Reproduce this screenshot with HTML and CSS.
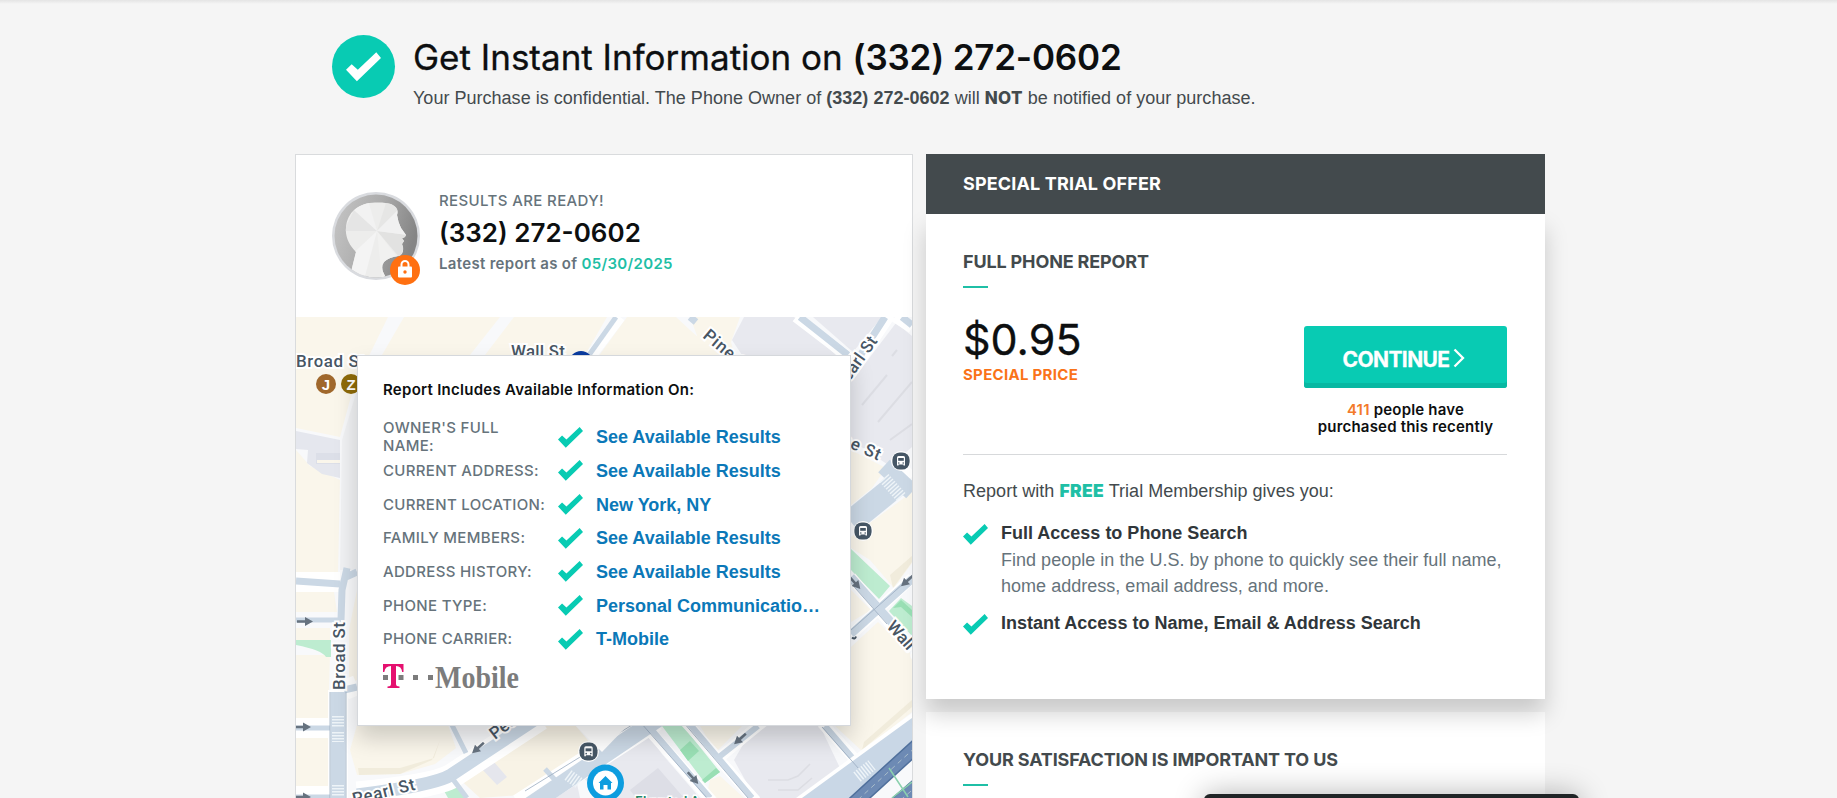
FILE: index.html
```html
<!DOCTYPE html>
<html lang="en">
<head>
<meta charset="utf-8">
<title>Phone Report</title>
<link rel="stylesheet" href="styles.css">
</head>
<body>
<svg class="defs" width="0" height="0">
  <symbol id="check" viewBox="0 0 74 62"><path d="M0 37 12 25 25 37 64 0 74 12 23 61Z" fill="currentColor"/></symbol>
  <symbol id="bus" viewBox="0 0 20 20"><circle cx="10" cy="10" r="10" fill="#fff"/><rect x="1.4" y="1.4" width="17.2" height="17.2" rx="7.5" fill="#465766"/><path d="M6 14.5V6.5Q6 5 7.500 5h5Q14 5 14 6.500v8h-1.500v-1h-5v1z" fill="#fff"/><path d="M7.200 7h5.600v2.800H7.200z" fill="#465766"/><circle cx="7.800" cy="12" r=".8" fill="#465766"/><circle cx="12.200" cy="12" r=".8" fill="#465766"/></symbol>
  <symbol id="arrow" viewBox="0 0 16 10"><path d="M0 3.700h8V0.500L16 5 8 9.500V6.300H0z" fill="#66727f"/></symbol>
</svg>
<div class="page">
  <header class="hero">
    <div class="hero-icon"><svg width="35" height="30"><use href="#check"/></svg></div>
    <div>
      <h1>Get Instant Information on <b>(332) 272-0602</b></h1>
      <p>Your Purchase is confidential. The Phone Owner of <b>(332) 272-0602</b> will <b class="not">NOT</b> be notified of your purchase.</p>
    </div>
  </header>
  <main class="columns">
    <section class="report">
      <div class="summary">
        <div class="avatar">
          <svg width="88" height="88" viewBox="0 0 88 88">
            <defs>
              <linearGradient id="ag" x1="0" x2="1" y1="0" y2=".3"><stop offset="0" stop-color="#c8c8c8"/><stop offset=".55" stop-color="#ababab"/><stop offset="1" stop-color="#858585"/></linearGradient>
              <clipPath id="ac"><circle cx="44" cy="44" r="41.500"/></clipPath>
              <clipPath id="hc"><path id="head" d="M17 88 24 60C17 53 13 44 14 36C15 19 28 11 43 10.500C55 10 63 12 65 17Q66 20 65 23Q66 30 69 36L74 43Q73 46 70 46L72 49 70 52 71 55Q72 62 67 64Q57 65 52 70Q47 77 56 88Z"/></clipPath>
            </defs>
            <circle cx="44" cy="44" r="44" fill="#d9dbdf"/>
            <g clip-path="url(#ac)">
              <rect width="88" height="88" fill="url(#ag)"/>
              <g clip-path="url(#hc)"><rect width="88" height="88" fill="#ededec"/>
                <path d="M45 39 12 39 22 18z" fill="#e5e5e5"/><path d="M45 39 36 8 22 18z" fill="#f2f2f2"/><path d="M45 39 55 8 66 18z" fill="#e6e6e5"/><path d="M45 39 76 43 68 66z" fill="#e2e2e1"/><path d="M45 39 66 66 50 88z" fill="#f1f1f0"/><path d="M45 39 32 88 12 70z" fill="#f4f4f4"/><path d="M45 39 66 18 76 43z" fill="#f1f1f1"/></g>
            </g>
          </svg>
          <span class="lock"><svg width="14" height="18" viewBox="0 0 14 18"><path d="M3.500 7V4.500a3.500 3.500 0 0 1 7 0V7" fill="none" stroke="#fff" stroke-width="2"/><rect y="6.500" width="14" height="11" rx="1" fill="#fff"/><circle cx="7" cy="12" r="1.700" fill="#ff7011"/></svg></span>
        </div>
        <div class="who">
          <div class="ready">RESULTS ARE READY!</div>
          <div class="number">(332) 272-0602</div>
          <div class="latest">Latest report as of <span>05/30/2025</span></div>
        </div>
      </div>
      <div class="map">
        <svg class="tiles" width="616" height="481" viewBox="296 317 616 481">
          <rect x="296" y="317" width="616" height="481" fill="#f8f9fb"/>
          <g fill="#faf6eb">
            <path d="M296 317H388L366 362 350 400 340 437 296 428zM404 317H500L470 355H382zM514 317H607L585 355H485zM627 317H676L690 330 720 357H598zM690 317H740L731 342 735 357H705z"/>
            <path d="M296 450 310 466 340 480 338 572H296zM296 592H334L337 612H296zM296 628H330V640H296zM296 655H330L328 720H296zM296 736H328V790H296z"/>
            <path d="M357 590V680L349 684V630z"/>
            <path d="M357 725H448L456 748 435 764 400 774 357 775 350 750z"/><path d="M500 740 520 725H575L598 752 520 795 480 798 455 775z" fill="#f8f3e6"/>
            <path d="M851 450 886 468 872 488 851 505z"/><path d="M912 492V563L894 588 870 560 851 548 851 537z"/><path d="M851 590 871 610 851 622zM851 647 878 622 912 655V712L862 751 834 725 851 715z"/>
            <path d="M700 726H742L716 752zM710 780 720 776 744 798H706z"/>
          </g>
          <g fill="#e8e9ef">
            <path d="M744 317H794L836 355H742L732 340z"/><path d="M813 317H882L853 352z"/>
            <path d="M851 382 896 323 912 336V447L890 466 851 440z"/>
            <path d="M646 732 662 754 700 798H600L584 778 600 764z"/><path d="M754 726H820L840 768 812 790 800 798H755L734 760z"/>
            <path d="M478 765 488 755 507 777 497 785z" fill="#e5e6ed"/><path d="M575 774 555 790 548 798H580z"/>
          </g>
          <path d="M630 790 658 768 684 798H636z" fill="#dddee6"/>
          <path d="M296 431 340 440V478L322 474 307 463 308 450 296 449z" fill="#e5e7ee"/><path d="M316 453h24v11h-24z" fill="#dcdfe8"/><path d="M317 460h23v3h-23z" fill="#faf6eb"/>
          <path d="M342 440 357 390V570H340z" fill="#f1f2f4"/>
          <g fill="none" stroke="#dcdde3" stroke-width="2"><path d="M878 422 912 382M862 405 887 375M890 440 912 424M892 356l5-6"/><path d="M768 780h20l10-4 12-12M778 790h20l14-12" stroke-width="1.500"/></g>
          <g fill="#f1ecdc"><path d="M358 768 400 768 434 758 440 740 432 760 400 774 359 775z"/><path d="M864 742 912 700V707L862 750zM890 575 912 556V562L893 588z"/></g>
          <g fill="#bdecd0"><path d="M296 640H331V657H326Q322 650 296 645zM443 789 455 785 467 798H448zM662 726H683L720 772 705 783z"/><path d="M851 549 890 586 879 599 851 570zM889 611 901 598 912 606V636z"/></g>
          <path d="M680 750 690 741 699 751 688 761zM893 608 901 600 912 610V617L901 607zM705 783 720 772 716 768 702 780z" fill="#99dfb4"/>
          <g fill="none" stroke="#fff">
            <path d="M620 317 590 357M796 317 851 359M890 315 851 374M912 328 895 317" stroke-width="11"/>
            <path d="M338 798V690M345 690 357 685M296 728H338M296 796H338M296 582H340" stroke-width="20"/>
            <path d="M357 794Q435 786 452 776L540 718M520 806 655 719" stroke-width="25"/><path d="M640 720 712 801M684 720 756 801M764 721 720 757M822 723 864 769M851 577 912 650M851 635 912 578M851 516 912 470" stroke-width="11"/>
          </g>
          <g fill="none" stroke="#cbd8e5">
            <path d="M616 317 589 355" stroke-width="5"/><path d="M800 317 848 355M885 317 851 370M902 317 912 325M690 317 696 322" stroke-width="7"/>
            <path d="M338 798V692" stroke-width="15"/><path d="M296 581 340 584M341 620 342 590 347 568M346 577 357 572M344 690 357 687" stroke-width="7"/><path d="M296 620H341M296 728H330M296 797H330" stroke-width="5"/>
            <path d="M357 795Q435 785 451 775L540 716" stroke-width="13"/><path d="M452 725 466 753M452 778 467 798M545 769 556 781" stroke-width="5"/><path d="M520 812 662 716" stroke-width="17"/>
            <path d="M645 722 710 798M688 722 752 798M758 726 719 757M825 726 862 769" stroke-width="6"/><path d="M851 577 892 623M851 634 912 579" stroke-width="8"/>
            <path d="M851 522 905 478" stroke-width="24"/><path d="M884 466 912 492" stroke-width="17"/>
          </g>
          <path d="M796 798 912 713V760L850 812z" fill="#fff"/><path d="M802 798 912 718V745L850 798z" fill="#c9d7e6"/>
          <g stroke="#9aacc0" fill="none" stroke-width=".8"><path d="M330 798V692M346 798V692M641 723 707 798M684 723 748 798M822 727 859 769M525 791 658 709M851 630 912 576M848 580 887 624"/></g>
          <g stroke="#eef4f8" stroke-width="12" stroke-dasharray="1.500 1.500" fill="none"><path d="M338 716v12M338 732v10M338 785v12M568 775 579 783M857 777 872 765M884 478 901 497"/></g>
          <g fill="none"><path d="M838 818 920 743M880 818 926 778" stroke="#50709c" stroke-width="15"/><path d="M838 818 920 743M880 818 926 778" stroke="#6d8ab4" stroke-width="12"/><path d="M838 818 920 743M880 818 926 778" stroke="#a9bdca" stroke-width="1" stroke-dasharray="5 4"/><path d="M892 798 912 782M889 768 908 797" stroke="#8bd1ae" stroke-width="1.500"/></g>
          <path d="M575 725H628L602 752z" fill="#fff"/>
          <g><use href="#arrow" x="297" y="616.500" width="16" height="10"/><use href="#arrow" x="295" y="722" width="16" height="10"/><use href="#arrow" x="295" y="792" width="16" height="10"/>
          <g transform="translate(478 748) rotate(138)"><use href="#arrow" x="-8" y="-5" width="16" height="10"/></g><g transform="translate(740 739) rotate(138)"><use href="#arrow" x="-8" y="-5" width="16" height="10"/></g><g transform="translate(693 778) rotate(48)"><use href="#arrow" x="-8" y="-5" width="16" height="10"/></g><g transform="translate(855 583) rotate(48)"><use href="#arrow" x="-8" y="-5" width="16" height="10"/></g><g transform="translate(907 581) rotate(138)"><use href="#arrow" x="-8" y="-5" width="16" height="10"/></g></g>
          <g class="street">
            <text x="296" y="367" textLength="69">Broad St</text><text x="511" y="357" textLength="54">Wall St</text>
            <text transform="translate(345 690) rotate(-90)" textLength="68">Broad St</text>
            <text transform="translate(354 805) rotate(-14)" textLength="64">Pearl St</text><text transform="translate(495 740) rotate(-38)">Pearl St</text>
            <text transform="translate(702 337) rotate(40)" textLength="58">Pine St</text><text transform="translate(843 391) rotate(-55)" textLength="61">Pearl St</text>
            <text transform="translate(825 437) rotate(24)" textLength="58">Pine St</text><text transform="translate(886 627) rotate(48)">Wall St</text>
          </g>
          <path d="M852 637.500Q855 640 856 636.500" fill="none" stroke="#485664" stroke-width="2"/>
          <text class="park" x="635" y="807" textLength="84">Elevated Acre</text>
          <circle cx="581" cy="363" r="12" fill="#0a3ca0"/>
          <g class="line"><circle cx="326" cy="384" r="10" fill="#a0682c"/><text x="326" y="389.500">J</text><circle cx="351" cy="384" r="10" fill="#8e6a08"/><text x="351" y="389.500">Z</text></g>
          <use href="#bus" x="578" y="741" width="21" height="21"/><use href="#bus" x="891" y="451" width="20" height="20"/><use href="#bus" x="853" y="521" width="20" height="20"/>
          <circle cx="605.500" cy="783" r="18.500" fill="#0d9ddf"/><circle cx="605.500" cy="783" r="12.500" fill="#fff"/><path d="M605.500 776 612.500 783H611V789.500H607.500V785H603.500V789.500H600V783H598.500z" fill="#0d9ddf"/>
        </svg>
        <div class="panel">
          <h2>Report Includes Available Information On:</h2>
          <dl>
            <div class="row first"><dt>OWNER'S FULL NAME:</dt><svg><use href="#check"/></svg><dd>See Available Results</dd></div>
            <div class="row"><dt>CURRENT ADDRESS:</dt><svg><use href="#check"/></svg><dd>See Available Results</dd></div>
            <div class="row"><dt>CURRENT LOCATION:</dt><svg><use href="#check"/></svg><dd>New York, NY</dd></div>
            <div class="row"><dt>FAMILY MEMBERS:</dt><svg><use href="#check"/></svg><dd>See Available Results</dd></div>
            <div class="row"><dt>ADDRESS HISTORY:</dt><svg><use href="#check"/></svg><dd>See Available Results</dd></div>
            <div class="row"><dt>PHONE TYPE:</dt><svg><use href="#check"/></svg><dd>Personal Communicatio…</dd></div>
            <div class="row"><dt>PHONE CARRIER:</dt><svg><use href="#check"/></svg><dd>T-Mobile</dd></div>
          </dl>
          <svg class="carrier" width="138" height="28" viewBox="0 0 138 28">
            <path d="M0 1h20.500v8h-1.300Q18.500 3 13 3v18q0 2.500 3.500 2.500V25h-12v-1.500Q8 23.500 8 21V3Q2 3 1.300 9H0z" fill="#e5106f"/>
            <path d="M0 12h5v5H0zM15.500 12h5v5h-5zM30 12h5v5h-5zM45 12h5v5h-5z" fill="#7c7c7c"/>
            <text x="52" y="25" textLength="84" lengthAdjust="spacingAndGlyphs">Mobile</text>
          </svg>
        </div>
      </div>
    </section>
    <aside>
      <div class="offer-head">SPECIAL TRIAL OFFER</div>
      <section class="offer">
        <h3>FULL PHONE REPORT</h3>
        <div class="deal">
          <div><div class="price">$0.95</div><div class="special">SPECIAL PRICE</div></div>
          <div class="buy">
            <a class="continue">CONTINUE<svg width="12" height="20" viewBox="0 0 12 20"><path d="M1.500 1.500 10 10 1.500 18.500" fill="none" stroke="#fff" stroke-width="2.300"/></svg></a>
            <p><span>411</span> people have<br>purchased this recently</p>
          </div>
        </div>
        <p class="gives">Report with <b>FREE</b> Trial Membership gives you:</p>
        <div class="perk"><svg><use href="#check"/></svg><div><b>Full Access to Phone Search</b><p>Find people in the U.S. by phone to quickly see their full name, home address, email address, and more.</p></div></div>
        <div class="perk"><svg><use href="#check"/></svg><div><b>Instant Access to Name, Email &amp; Address Search</b></div></div>
      </section>
      <section class="satisfaction"><h3>YOUR SATISFACTION IS IMPORTANT TO US</h3></section>
    </aside>
  </main>
  <div class="toast"></div>
</div>
</body>
</html>
```
FILE: styles.css
```css
* { box-sizing: border-box; }
body { margin: 0; background: #f5f5f5; font-family: Inter, sans-serif; color: #0d0f10; }
h1, h2, h3, p, dl, dd { margin: 0; }
.defs { display: block; position: absolute; }
.page { height: 798px; overflow: hidden; position: relative; padding-left: 295px; background: linear-gradient(#e4e4e4, #f5f5f5 4px); }
.hero { display: flex; gap: 18px; height: 154px; padding: 35px 0 0 37px; }
.hero-icon { width: 63px; height: 63px; border-radius: 50%; background: #08cbb3; color: #fff; display: flex; align-items: center; justify-content: center; }
h1 { font-size: 35px; line-height: 44px; font-weight: 400; white-space: nowrap; -webkit-text-stroke: .3px currentColor; }
h1 b { font-weight: 600; letter-spacing: -.2px; -webkit-text-stroke: 0; }
.hero p { font: 18px/27px "Liberation Sans", Arial, sans-serif; color: #434a4d; margin-top: 6px; white-space: nowrap; letter-spacing: .02px; }
.hero .not { font-family: Inter, sans-serif; font-weight: 800; font-size: 17px; letter-spacing: .3px; }
.columns { display: grid; grid-template-columns: 618px 619px; gap: 13px; height: 644px; }
.report { background: #fff; border: 1px solid #d9dbdd; height: 660px; }
.summary { height: 162px; display: flex; padding: 37px 0 0 36px; gap: 19px; }
.avatar { position: relative; width: 88px; height: 93px; }
.lock { position: absolute; left: 58px; top: 63px; width: 30px; height: 30px; border-radius: 50%; background: #ff7011; display: flex; align-items: center; justify-content: center; padding-bottom: 2px; }
.who { margin-top: -1px; }
.ready { font-size: 15px; line-height: 20px; font-weight: 500; color: #66737b; letter-spacing: .38px; }
.number { font-size: 26px; line-height: 36px; font-weight: 600; margin-top: 4px; }
.latest { font-size: 15px; line-height: 20px; font-weight: 600; color: #66737b; letter-spacing: .32px; margin-top: 3px; }
.latest span { color: #1fbfa6; }
.map { position: relative; height: 481px; overflow: hidden; padding: 38px 0 0 61px; }
.tiles { position: absolute; left: 0; top: 0; }
.street text { font: 500 17px Roboto, sans-serif; fill: #485664; stroke: #fff; stroke-width: 4px; paint-order: stroke; }
.park { font: 500 15px Roboto, sans-serif; fill: #258768; stroke: #fff; stroke-width: 3px; paint-order: stroke; }
.line text { font: 700 15px "Liberation Sans", sans-serif; fill: #fff; text-anchor: middle; }
.panel { position: relative; width: 494px; height: 371px; background: #fff; border: 1px solid #d5d8dc; box-shadow: 0 12px 22px rgba(0,0,0,.18); padding: 24px 24px 0 25px; }
h2 { font-size: 15px; line-height: 20px; font-weight: 600; letter-spacing: .27px; }
dl { padding-top: 19px; }
.row { display: grid; grid-template-columns: 175px 38px 230px; align-items: center; height: 33.7px; }
.row.first { height: 35px; }
dt { font-size: 15px; line-height: 18px; font-weight: 500; color: #66737b; letter-spacing: .33px; white-space: nowrap; }
.first dt { white-space: normal; padding-right: 50px; }
.row svg, .perk > svg { width: 25px; height: 21px; color: #08cbb3; }
dd { font: 700 18px/22px "Liberation Sans", Arial, sans-serif; color: #0b78b8; white-space: nowrap; }
.carrier { display: block; margin-top: 7px; }
.carrier text { font: 700 32px "Liberation Serif", serif; fill: #7c7c7c; }
.offer-head { position: relative; z-index: 2; height: 60px; background: #434a4d; color: #fff; font-size: 18px; line-height: 60px; font-weight: 700; letter-spacing: .15px; padding-left: 37px; }
.offer { position: relative; z-index: 1; height: 485px; background: #fff; padding: 36px 38px 0 37px; box-shadow: 0 15px 22px rgba(0,0,0,.18); }
h3 { font-size: 18px; line-height: 24px; font-weight: 700; letter-spacing: -.15px; color: #434a4d; }
h3::after { content: ""; display: block; width: 25px; height: 2px; margin-top: 12px; background: #1fbfa6; }
.deal { display: flex; justify-content: space-between; height: 167px; padding-top: 38px; border-bottom: 1px solid #d7d9db; }
.price { font-size: 43px; line-height: 46px; margin-top: -10px; -webkit-text-stroke: .3px currentColor; }
.special { color: #fa7319; font-size: 15px; line-height: 20px; font-weight: 700; letter-spacing: .3px; margin-top: 3px; }
.buy { width: 203px; text-align: center; }
.continue { height: 62px; border-radius: 3px; background: #08cbb3; box-shadow: inset 0 -5px #07b8a2; color: #fff; font-size: 21px; font-weight: 700; letter-spacing: -.6px; -webkit-text-stroke: .3px #fff; display: flex; align-items: center; justify-content: center; gap: 4px; padding: 5px 3px 0 0; }
.continue svg { margin-bottom: 3px; }
.buy p { font-size: 15px; line-height: 17px; font-weight: 600; letter-spacing: .2px; margin: 13px -10px 0; white-space: nowrap; }
.buy span { color: #f37a2a; }
.gives { font: 18px/26px "Liberation Sans", Arial, sans-serif; color: #434a4d; padding: 23px 0 16px; letter-spacing: .03px; }
.gives b { font-family: Inter, sans-serif; font-weight: 900; font-size: 17.5px; letter-spacing: .3px; color: #1fbfa6; }
.perk { display: grid; grid-template-columns: 38px 1fr; font: 18px/26px "Liberation Sans", Arial, sans-serif; padding-bottom: 11px; color: #30363a; }
.perk > svg { margin-top: 4px; }
.perk p { color: #66737b; margin: 1px -6px 0 0; letter-spacing: .02px; }
.satisfaction { margin-top: 13px; height: 100px; background: #fff; padding: 36px 37px; }
.toast { position: absolute; left: 1204px; top: 794px; width: 375px; height: 40px; border-radius: 6px; background: #202426; box-shadow: 0 0 30px rgba(0,0,0,.3); z-index: 3; }
```
